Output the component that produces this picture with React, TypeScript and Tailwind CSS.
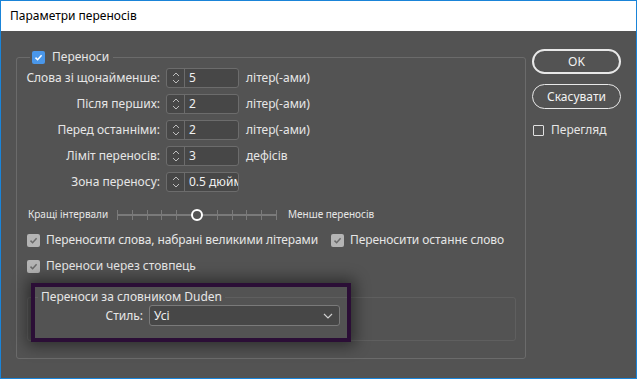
import React from 'react';

const font = { fontFamily: '"Noto Sans", "Open Sans", sans-serif' };

const Check: React.FC<{ blue?: boolean }> = ({ blue }) => (
  <span
    className={`flex h-[13px] w-[13px] items-center justify-center rounded-[2px] ${
      blue ? 'bg-[#4a97ea]' : 'bg-[#b4b4b4]'
    }`}
  >
    <svg width="9" height="9" viewBox="0 0 9 9">
      <path
        d="M1.5 4.6 L3.6 6.7 L7.6 2.2"
        fill="none"
        stroke={blue ? '#ffffff' : '#6a6a6a'}
        strokeWidth="1.5"
      />
    </svg>
  </span>
);

const Spinner: React.FC<{ value: string }> = ({ value }) => (
  <div className="flex h-[20px] w-[73px] rounded-[3px] border border-[#6c6c6c] bg-[#474747]">
    <div className="flex w-[18px] flex-col items-center justify-center border-r border-[#6c6c6c]">
      <svg width="8" height="14" viewBox="0 0 8 14">
        <path d="M1 5 L4 2 L7 5" fill="none" stroke="#bdbdbd" strokeWidth="1" />
        <path d="M1 9 L4 12 L7 9" fill="none" stroke="#bdbdbd" strokeWidth="1" />
      </svg>
    </div>
    <div className="flex-1 overflow-hidden whitespace-nowrap pl-[4px] leading-[18px] text-[#f0f0f0]">{value}</div>
  </div>
);

const rows = [
  { label: 'Слова зі щонайменше:', value: '5', unit: 'літер(-ами)' },
  { label: 'Після перших:', value: '2', unit: 'літер(-ами)' },
  { label: 'Перед останніми:', value: '2', unit: 'літер(-ами)' },
  { label: 'Ліміт переносів:', value: '3', unit: 'дефісів' },
  { label: 'Зона переносу:', value: '0.5 дюйм', unit: '' },
];

export default function App() {
  return (
    <div
      className="flex h-[379px] w-[637px] flex-col border border-[#1a84d8] bg-[#535353] text-[12px] text-[#e6e6e6]"
      style={font}
    >
      <div className="flex h-[30px] items-center bg-white pl-[9px] text-[12px] text-black">Параметри переносів</div>

      <div className="relative flex flex-1 pl-[15px] pt-[18px]">
        {/* main group */}
        <fieldset className="h-[310px] w-[510px] rounded-[3px] border border-[#6b6b6b]">
          <legend className="ml-[13px] flex items-center gap-[7px] px-[2px] text-[12px] leading-[16px]">
            <Check blue />
            <span className="pr-[2px]">Переноси</span>
          </legend>

          <div className="mt-[3px] flex flex-col gap-[6px]">
            {rows.map((r) => (
              <div key={r.label} className="flex h-[20px] items-center">
                <div className="w-[143px] text-right">{r.label}</div>
                <div className="ml-[6px]">
                  <Spinner value={r.value} />
                </div>
                <div className="ml-[7px]">{r.unit}</div>
              </div>
            ))}
          </div>

          <div className="mt-[15px] flex items-center pl-[11px] text-[10px]">
            <span className="w-[89px]">Кращі інтервали</span>
            <div className="relative flex h-[14px] w-[160px] items-center">
              <div className="h-[2px] w-full bg-[#7a7a7a]" />
              <div className="absolute inset-0 flex items-center justify-between">
                {Array.from({ length: 11 }).map((_, i) =>
                  i === 5 ? (
                    <span key={i} className="h-[12px] w-[12px] rounded-full border-[2px] border-white bg-[#535353]" />
                  ) : (
                    <span key={i} className="h-[10px] w-[1px] bg-[#7a7a7a]" />
                  ),
                )}
              </div>
            </div>
            <span className="ml-[11px]">Менше переносів</span>
          </div>

          <div className="mt-[9px] flex items-center pl-[10px] tracking-[-0.1px]">
            <Check />
            <span className="ml-[6px]">Переносити слова, набрані великими літерами</span>
            <span className="ml-[13px]">
              <Check />
            </span>
            <span className="ml-[6px]">Переносити останнє слово</span>
          </div>

          <div className="mt-[8px] flex items-center pl-[10px]">
            <Check />
            <span className="ml-[6px]">Переноси через стовпець</span>
          </div>

          <fieldset className="ml-[10px] mt-[14px] h-[52px] w-[489px] rounded-[3px] border border-[#5f5f5f]">
            <legend className="ml-[10px] px-[3px] leading-[16px]">Переноси за словником Duden</legend>
            <div className="flex items-center">
              <span className="w-[115px] text-right">Стиль:</span>
              <div className="ml-[6px] flex h-[21px] w-[191px] items-center justify-between rounded-[3px] border border-[#7a7a7a] bg-[#474747] pl-[4px] pr-[6px] text-[#f0f0f0]">
                <span>Усі</span>
                <svg width="10" height="6" viewBox="0 0 10 6">
                  <path d="M1 1 L5 5 L9 1" fill="none" stroke="#cfcfcf" strokeWidth="1.2" />
                </svg>
              </div>
            </div>
          </fieldset>
        </fieldset>

        {/* highlight overlay */}
        <div className="pointer-events-none absolute left-[30px] top-[252px] h-[59px] w-[320px] border-[4px] border-[#2b0e36] shadow-[0_0_14px_4px_rgba(0,0,0,0.45)]" />

        {/* buttons */}
        <div className="ml-[6px] flex w-[89px] flex-col">
          <button className="h-[25px] rounded-full border-[2px] border-[#e8e8e8] text-[12px] text-[#f2f2f2]">OK</button>
          <button className="mt-[10px] h-[25px] rounded-full border border-[#e8e8e8] text-[12px] text-[#f2f2f2]">
            Скасувати
          </button>
          <div className="mt-[12px] flex items-center gap-[7px] pl-[1px]">
            <span className="h-[11px] w-[11px] rounded-[1px] border border-[#e0e0e0]" />
            <span>Перегляд</span>
          </div>
        </div>
      </div>
    </div>
  );
}
